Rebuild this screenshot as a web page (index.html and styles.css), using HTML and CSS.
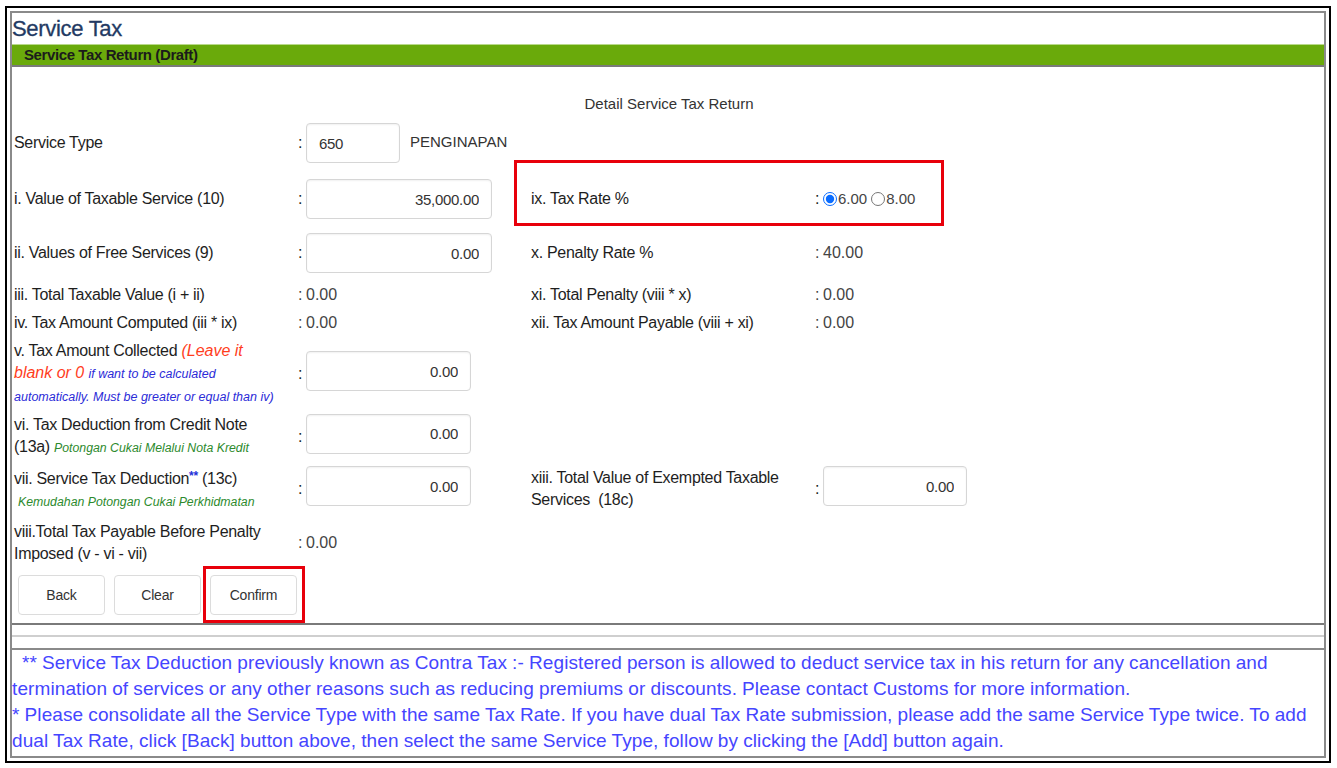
FILE: index.html
```html
<!DOCTYPE html>
<html>
<head>
<meta charset="utf-8">
<link rel="stylesheet" href="styles.css">
</head>
<body>
<div class="frame">
  <div class="inner">
    <h1 class="title">Service Tax</h1>
    <div class="bar">Service Tax Return (Draft)</div>
    <div class="form">
      <div class="caption">Detail Service Tax Return</div>

      <div class="row r-st">
        <div class="lbl">Service Type</div>
        <div class="col">:</div>
        <div class="fld"><input class="inp inp-code" value="650"><span class="desc">PENGINAPAN</span></div>
      </div>

      <div class="row r-i">
        <div class="lbl">i. Value of Taxable Service (10)</div>
        <div class="col">:</div>
        <div class="fld"><input class="inp inp-wide" value="35,000.00"></div>
        <div class="lbl lbl-r mark-rate">ix. Tax Rate %</div>
        <div class="col">:</div>
        <div class="fld val radios">
          <label class="radio"><input type="radio" name="rate" checked>6.00</label>
          <label class="radio"><input type="radio" name="rate">8.00</label>
        </div>
      </div>

      <div class="row r-ii">
        <div class="lbl">ii. Values of Free Services (9)</div>
        <div class="col">:</div>
        <div class="fld"><input class="inp inp-wide" value="0.00"></div>
        <div class="lbl lbl-r">x. Penalty Rate %</div>
        <div class="col val">:</div>
        <div class="fld val">40.00</div>
      </div>

      <div class="row r-iii">
        <div class="lbl">iii. Total Taxable Value (i + ii)</div>
        <div class="col val">:</div>
        <div class="fld val">0.00</div>
        <div class="lbl lbl-r">xi. Total Penalty (viii * x)</div>
        <div class="col val">:</div>
        <div class="fld val">0.00</div>
      </div>

      <div class="row r-iv">
        <div class="lbl">iv. Tax Amount Computed (iii * ix)</div>
        <div class="col val">:</div>
        <div class="fld val">0.00</div>
        <div class="lbl lbl-r">xii. Tax Amount Payable (viii + xi)</div>
        <div class="col val">:</div>
        <div class="fld val">0.00</div>
      </div>

      <div class="row r-v">
        <div class="lbl lbl-multi">v. Tax Amount Collected <span class="warn">(Leave it<br>blank or 0</span> <span class="hint">if want to be calculated<br>automatically. Must be greater or equal than iv)</span></div>
        <div class="col">:</div>
        <div class="fld fld-up"><input class="inp inp-mid" value="0.00"></div>
      </div>

      <div class="row r-vi">
        <div class="lbl lbl-multi">vi. Tax Deduction from Credit Note<br>(13a) <span class="green">Potongan Cukai Melalui Nota Kredit</span></div>
        <div class="col">:</div>
        <div class="fld fld-up"><input class="inp inp-mid" value="0.00"></div>
      </div>

      <div class="row r-vii">
        <div class="lbl lbl-multi">vii. Service Tax Deduction<span class="stars">**</span> (13c)<br><span class="green green-ind">Kemudahan Potongan Cukai Perkhidmatan</span></div>
        <div class="col">:</div>
        <div class="fld fld-up"><input class="inp inp-mid" value="0.00"></div>
        <div class="lbl lbl-r lbl-multi">xiii. Total Value of Exempted Taxable<br>Services &nbsp;(18c)</div>
        <div class="col">:</div>
        <div class="fld fld-up"><input class="inp inp-small" value="0.00"></div>
      </div>

      <div class="row r-viii">
        <div class="lbl lbl-multi">viii.Total Tax Payable Before Penalty<br>Imposed (v - vi - vii)</div>
        <div class="col val">:</div>
        <div class="fld val">0.00</div>
      </div>

      <div class="actions">
        <button class="btn">Back</button>
        <button class="btn">Clear</button>
        <span class="mark-btn"><button class="btn">Confirm</button></span>
      </div>
    </div>
    <div class="sep"></div>
    <div class="notes">
      <p class="note note-first">** Service Tax Deduction previously known as Contra Tax :- Registered person is allowed to deduct service tax in his return for any cancellation and termination of services or any other reasons such as reducing premiums or discounts. Please contact Customs for more information.</p>
      <p class="note">* Please consolidate all the Service Type with the same Tax Rate. If you have dual Tax Rate submission, please add the same Service Type twice. To add dual Tax Rate, click [Back] button above, then select the same Service Type, follow by clicking the [Add] button again.</p>
    </div>
  </div>
</div>
</body>
</html>
```

FILE: styles.css
```css
* { box-sizing: border-box; }
html, body { margin: 0; padding: 0; background: #fff; }
body {
  font-family: "Liberation Sans", Arial, sans-serif;
  color: #1e1e1e;
}
.frame {
  margin: 6px 0 0 5px;
  width: 1326px;
  height: 757px;
  border: 2px solid #000;
  padding: 3px;
}
.inner {
  height: 100%;
  border: 2px solid #8a8a8a;
  display: flex;
  flex-direction: column;
}
.title {
  margin: 0;
  font-size: 22px;
  font-weight: normal;
  line-height: 31px;
  color: #233a63;
  letter-spacing: -0.3px;
  -webkit-text-stroke: 0.3px #233a63;
}
.bar {
  height: 23px;
  background: #6aaa0b;
  border-top: 1px solid #b9d98a;
  border-bottom: 2px solid #7a7a7a;
  padding-left: 12px;
  font-size: 15px;
  line-height: 20px;
  font-weight: bold;
  letter-spacing: -0.4px;
  color: #1b1b1b;
}
.form {
  border-bottom: 2px solid #7a7a7a;
  padding: 27px 0 8px 2px;
}
.caption {
  text-align: center;
  font-size: 15px;
  line-height: 20px;
  color: #333;
}
.row {
  display: grid;
  grid-template-columns: 284px 8px 225px 284px 8px 1fr;
  align-items: center;
  font-size: 16px;
  line-height: 22px;
}
.lbl { letter-spacing: -0.3px; }
.lbl-multi { line-height: 22px; }
.col { text-align: left; }
.val { color: #444; }
.fld { display: flex; align-items: center; }
.fld-up { margin-top: -6px; }
.r-st { margin-top: 9px; }
.r-i { margin-top: 16px; }
.r-ii { margin-top: 14px; }
.r-iii { margin-top: 11px; }
.r-iv { margin-top: 6px; }
.r-v { margin-top: 6px; }
.r-vi { margin-top: 6px; }
.r-vii { margin-top: 6px; }
.r-viii { margin-top: 8px; }
.inp {
  height: 40px;
  border: 1px solid #d6d6d6;
  border-radius: 4px;
  box-shadow: inset 0 1px 2px rgba(0,0,0,0.06);
  background: #fff;
  font-family: "Liberation Sans", Arial, sans-serif;
  font-size: 15px;
  letter-spacing: -0.3px;
  color: #333;
  text-align: right;
  padding: 0 12px;
  outline: none;
}
.inp-code { width: 94px; text-align: left; padding-left: 12px; }
.inp-wide { width: 186px; }
.inp-mid { width: 165px; }
.inp-small { width: 144px; }
.desc { margin-left: 10px; font-size: 15px; color: #333; margin-top: -2px; }
.lbl-r { position: relative; }
.mark-rate::after {
  content: "";
  position: absolute;
  left: -17px;
  top: -28px;
  width: 424px;
  height: 60px;
  border: 3px solid #e8000b;
  pointer-events: none;
}
.radios { gap: 4px; }
.radio { display: inline-flex; align-items: center; color: #444; font-size: 15px; }
.radio input { margin: 0 1px 0 0; width: 14px; height: 14px; accent-color: #0a6cff; }
.warn { color: #ff3d1d; font-style: italic; letter-spacing: 0; }
.hint { color: #2b2bd8; font-style: italic; font-size: 12.5px; letter-spacing: 0; }
.green { color: #2d8a2d; font-style: italic; font-size: 12.3px; letter-spacing: 0; }
.green-ind { margin-left: 4px; }
.stars { color: #1f2fd8; font-weight: bold; font-size: 12px; vertical-align: 4px; }
.actions {
  display: flex;
  gap: 9px;
  margin-top: 10px;
  padding-left: 4px;
}
.btn {
  width: 87px;
  height: 40px;
  background: #fff;
  border: 1px solid #dcdcdc;
  border-radius: 4px;
  font-family: "Liberation Sans", Arial, sans-serif;
  font-size: 14px;
  letter-spacing: -0.2px;
  color: #333;
}
.mark-btn { position: relative; display: inline-block; }
.mark-btn::after {
  content: "";
  position: absolute;
  left: -7px;
  top: -9px;
  right: -8px;
  bottom: -8px;
  border: 3px solid #e8000b;
  pointer-events: none;
}
.sep {
  height: 25px;
  border-bottom: 2px solid #8a8a8a;
  position: relative;
}
.sep::before {
  content: "";
  position: absolute;
  left: 0; right: 0;
  top: 10px;
  height: 2px;
  background: #cfcfcf;
}
.notes {
  color: #4545ff;
  font-size: 19px;
  line-height: 26px;
  letter-spacing: 0.1px;
  word-spacing: -0.3px;
}
.note { margin: 0; }
.note-first { text-indent: 10px; }
```
